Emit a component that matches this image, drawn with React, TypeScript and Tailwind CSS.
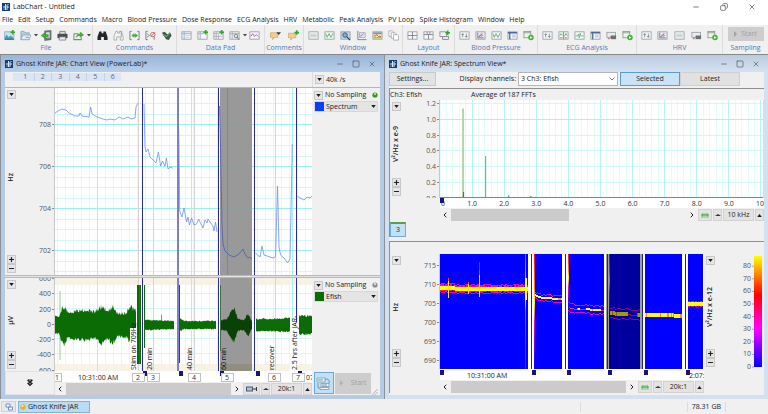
import { useState } from "react";
import type { ReactNode } from "react";
import { ChevronLeft, ChevronRight, Copy, Minus, Plus, Square, X } from "lucide-react";
import clsx from "clsx";

type Point = [number, number];

const MENUS = [
  "File", "Edit", "Setup", "Commands", "Macro", "Blood Pressure", "Dose Response", "ECG Analysis",
  "HRV", "Metabolic", "Peak Analysis", "PV Loop", "Spike Histogram", "Window", "Help",
];

const TOOL_GROUPS = [
  { label: "File", width: "w-[93px]", icons: ["new", "open", "caret", "import", "print", "export", "caret"] },
  { label: "Commands", width: "w-[84px]", icons: ["find", "findNext", "bracket", "bracketOff", "macro"] },
  { label: "Data Pad", width: "w-[88px]", icons: ["pad", "padAdd", "padMulti", "padView", "caret", "padWave"] },
  { label: "Comments", width: "w-[39px]", icons: ["comment", "commentAdd"] },
  { label: "Window", width: "w-[99px]", icons: ["list", "wave", "zoom", "xy", "spectrum", "pages"] },
  { label: "Layout", width: "w-[52px]", icons: ["grid", "grid2", "layoutAdd"] },
  { label: "Blood Pressure", width: "w-[83px]", icons: ["settings", "scatter", "wave", "table", "run"] },
  { label: "ECG Analysis", width: "w-[99px]", icons: ["settings", "split", "ecg", "table", "report", "run"] },
  { label: "HRV", width: "w-[86px]", icons: ["settings", "scatter", "list", "report", "run"] },
];

/* ---------- toolbar icons ---------- */

function Sheet({ fill = "#f4f6f8" }: { fill?: string }) {
  return <rect x="1" y="2" width="10" height="8" fill={fill} stroke="#8b929a" strokeWidth="0.8" />;
}

function AddMark({ x, y }: { x: number; y: number }) {
  return <path d={`M${x - 2.5} ${y}h5M${x} ${y - 2.5}v5`} stroke="#35a52c" strokeWidth="1.8" />;
}

const ICONS: Record<string, ReactNode> = {
  new: (
    <>
      <rect x="0.8" y="2" width="10" height="8.6" fill="#c3e4f4" stroke="#7a98ab" strokeWidth="0.7" />
      <path d="M1 8l2-3 2 3 2-2 3 2v2.5H1z" fill="#4e9fc4" />
      <path d="M1 10h10" stroke="#446577" />
      <AddMark x={9.5} y={2.5} />
    </>
  ),
  open: (
    <>
      <path d="M1 10.5V1.5h3.5l1 1.5h4.5v7.5z" fill="#b7cede" stroke="#7895aa" strokeWidth="0.7" />
      <path d="M1 10.5l2-5h9l-2 5z" fill="#e6f0f6" stroke="#7895aa" strokeWidth="0.7" />
      <path d="M6 8h4" stroke="#58a2c5" />
    </>
  ),
  import: (
    <>
      <path d="M4 1l7-.5v10l-7 1z" fill="#70797f" stroke="#555c60" strokeWidth="0.6" />
      <path d="M5.5 2.5h4v6h-4z" fill="#d9dfe0" />
      <path d="M0 6l4-3v2h4v2.5H4V9z" fill="#3fb532" stroke="#2b8522" strokeWidth="0.4" />
    </>
  ),
  print: (
    <>
      <path d="M3 1.5h6V5H3z" fill="#ddd" stroke="#666" strokeWidth="0.8" />
      <rect x="0.5" y="4" width="11" height="5" rx="0.8" fill="#4b4e52" />
      <path d="M2.5 7.5h7V11h-7z" fill="#e9e9e9" stroke="#666" strokeWidth="0.7" />
    </>
  ),
  export: (
    <>
      <path d="M1 4h5M1 4v6.5h8V8" fill="none" stroke="#7b858c" strokeWidth="1.1" />
      <path d="M3 9c0-3 2-5 4.500-5V1.500L12 5.500 7.500 8.500V6.500C5.500 6.500 4 7 3 9z" fill="#45ad38" />
    </>
  ),
  find: (
    <path d="M2.500 1.500h2.500v2h2v-2h2.500l2 6V11H7.500V7.500h-3V11H.5V7.500z" fill="#25282b" />
  ),
  findNext: (
    <>
      <path d="M3 1.500h2v2h2v-2h2l2 6V11H8V7.500H4V11H1V7.500z" fill="#f5f5f5" stroke="#9a9ea2" strokeWidth="0.8" />
      <path d="M9 1v7" stroke="#777" strokeWidth="0.7" />
    </>
  ),
  bracket: (
    <>
      <path d="M3 1.500H1v9h2M9 1.500h2v9H9" fill="none" stroke="#676c70" strokeWidth="0.9" />
      <path d="M3 6l2.500-2v1.200H7V4l2.500 2L7 8V6.800H5.500V8z" fill="#3cb52e" stroke="#3cb52e" strokeWidth="0.6" />
    </>
  ),
  bracketOff: (
    <>
      <path d="M3 1.500H1v9h2M10 7v3.500" fill="none" stroke="#676c70" strokeWidth="0.9" />
      <path d="M2 4l3 2-3 2" fill="none" stroke="#777" strokeWidth="0.8" />
      <circle cx="8.500" cy="5" r="2.400" fill="none" stroke="#c9565b" strokeWidth="0.9" />
      <path d="M6.500 7l4.500-4.500" stroke="#c9565b" strokeWidth="0.9" />
    </>
  ),
  macro: (
    <>
      <path d="M1 3l3-1 3 3 3-2 1.500 3-3 5-3-1z" fill="#4a5257" />
      <path d="M2 5l4 2 4-4" fill="none" stroke="#46b33a" strokeWidth="1.4" />
    </>
  ),
  pad: (
    <>
      <Sheet />
      <path d="M1 4h10M3.500 2v8" stroke="#8fa8cf" strokeWidth="0.9" />
      <path d="M5 6h5M5 8h4" stroke="#b9c4d6" strokeWidth="0.7" />
    </>
  ),
  padAdd: (
    <>
      <Sheet />
      <path d="M1 4h7M3.500 2v8" stroke="#8fa8cf" strokeWidth="0.9" />
      <AddMark x={9.5} y={2.5} />
    </>
  ),
  padMulti: (
    <>
      <Sheet />
      <path d="M1 4h7M3.500 2v8M6 5v5M1 7h9" stroke="#929ba6" strokeWidth="0.7" />
      <AddMark x={9.5} y={2.5} />
    </>
  ),
  padView: (
    <>
      <Sheet />
      <path d="M1 4h10M3.500 2v8" stroke="#8d959e" strokeWidth="0.7" />
      <circle cx="7.500" cy="6.500" r="2" fill="#d7e2ec" stroke="#666" strokeWidth="0.8" />
      <path d="M9 8l2 2.500" stroke="#555" />
    </>
  ),
  padWave: (
    <>
      <Sheet />
      <path d="M2 7l2-3 2 3 2-2 2 2" fill="none" stroke="#a348b5" strokeWidth="0.9" />
    </>
  ),
  comment: (
    <>
      <path d="M.5 3h8v5H5l-2 2.500V8H.5z" fill="#f1cf86" stroke="#b3995d" strokeWidth="0.6" />
      <path d="M7 2.500h5L9.500 5.500z" fill="#3a3a3a" />
    </>
  ),
  commentAdd: (
    <>
      <path d="M.5 3.500h8v5H5L3 11V8.500H.5z" fill="#f1cf86" stroke="#b3995d" strokeWidth="0.6" />
      <AddMark x={9.5} y={2.8} />
    </>
  ),
  list: (
    <>
      <Sheet />
      <path d="M2.500 4.500h7M2.500 6h7M2.500 7.500h7" stroke="#a5bda0" strokeWidth="0.7" />
    </>
  ),
  wave: (
    <>
      <Sheet />
      <path d="M2 4l1.500 4L5.500 4l2 4L10 3.500" fill="none" stroke="#4fa950" strokeWidth="0.9" />
    </>
  ),
  zoom: (
    <>
      <Sheet fill="#c3d6e8" />
      <circle cx="5.500" cy="5.500" r="2.500" fill="#78add7" stroke="#3b5268" strokeWidth="0.9" />
      <path d="M7.500 7.500L11 11" stroke="#2d3a46" strokeWidth="1.3" />
    </>
  ),
  xy: (
    <>
      <path d="M2 1v9.500h9.500" fill="none" stroke="#6f7e95" />
      <rect x="4" y="3" width="6" height="5" fill="#dde4f0" stroke="#8090aa" strokeWidth="0.6" />
      <path d="M4.500 7l4-3" stroke="#a55b76" strokeWidth="0.8" />
    </>
  ),
  spectrum: (
    <>
      <Sheet fill="#f6edaa" />
      <path d="M1.400 2.600h9.200v2H1.400z" fill="#6d93d1" />
      <path d="M2 6.500h2l1-1.500 2 2h3" fill="none" stroke="#b9483f" strokeWidth="0.9" />
      <path d="M2 8.500h8" stroke="#53a453" strokeWidth="0.9" />
    </>
  ),
  pages: (
    <>
      <path d="M1 1h4l1 1v5H1z" fill="#fff" stroke="#8b9197" strokeWidth="0.7" />
      <path d="M3.500 3h4l1 1v5h-5z" fill="#fff" stroke="#8b9197" strokeWidth="0.7" />
      <path d="M6 5h4l1.500 1.500V11H6z" fill="#fff" stroke="#8b9197" strokeWidth="0.7" />
    </>
  ),
  grid: (
    <>
      <Sheet />
      <path d="M6 2v8M1 6h10" stroke="#747a80" strokeWidth="0.9" />
    </>
  ),
  grid2: (
    <>
      <Sheet />
      <path d="M1 5h10M4.500 2v3M7.500 2v3M6 5v5" stroke="#747a80" strokeWidth="0.9" />
    </>
  ),
  layoutAdd: (
    <>
      <rect x="1" y="2" width="7" height="5" fill="#f4f6f8" stroke="#747a80" strokeWidth="0.8" />
      <rect x="4" y="7" width="6.500" height="3.500" fill="#e4e8ec" stroke="#747a80" strokeWidth="0.8" />
      <AddMark x={9.5} y={3} />
    </>
  ),
  settings: (
    <>
      <Sheet />
      <path d="M4 4v4M2.800 5.400L4 4l1.200 1.400M8 4v4M6.800 6.600L8 8l1.200-1.400" fill="none" stroke="#54606b" strokeWidth="0.7" />
    </>
  ),
  scatter: (
    <>
      <Sheet fill="#e7e9f4" />
      <path d="M3 3v5.500h6.500" fill="none" stroke="#5b64a0" strokeWidth="0.8" />
      <path d="M4 7.500l4-3.500" stroke="#cc5a5a" strokeWidth="1.1" />
      <path d="M6.500 7l2-1" stroke="#58ad58" />
    </>
  ),
  table: (
    <>
      <Sheet />
      <path d="M1 3h10" stroke="#4d699c" strokeWidth="1.6" />
      <path d="M3 3v7" stroke="#4d699c" strokeWidth="1.4" />
      <path d="M5.500 5.500h4M5.500 7.500h4" stroke="#98a9c6" strokeWidth="0.8" />
    </>
  ),
  split: (
    <>
      <Sheet />
      <path d="M6 2v8" stroke="#777" strokeWidth="0.8" />
      <path d="M2 6l1.500-2L5 6M7 7l1.500-3L10 6" fill="none" stroke="#49a349" strokeWidth="0.9" />
      <path d="M2 8.500h3M7 8.500h3" stroke="#b96378" strokeWidth="0.9" />
    </>
  ),
  ecg: (
    <>
      <Sheet />
      <path d="M1.500 6.500H4l.7-2 1 4 1-5 .8 3h3" fill="none" stroke="#4fae63" strokeWidth="0.8" />
    </>
  ),
  report: (
    <>
      <rect x="1" y="2.500" width="9.500" height="5.500" fill="#e9ebee" stroke="#8b9197" strokeWidth="0.8" />
      <path d="M5 6h6v4H5z" fill="#6a7077" />
      <path d="M2 9.500h2" stroke="#c35252" />
    </>
  ),
  run: (
    <>
      <rect x="1" y="1.500" width="7.500" height="7" fill="#edf3ec" stroke="#7d8b7d" strokeWidth="0.8" />
      <path d="M1 3h7.500" stroke="#7d8b7d" strokeWidth="0.8" />
      <circle cx="8.700" cy="8.200" r="3" fill="#3fb532" />
      <path d="M7.800 6.600v3.200l2.500-1.600z" fill="#fff" />
    </>
  ),
};

function ToolButton({ kind }: { kind: string }) {
  if (kind === "caret") {
    return (
      <button aria-label="More" className="flex h-3 w-1 items-center">
        <svg viewBox="0 0 4 4" className="size-1"><path d="M0 1h4L2 3.500z" fill="#444" /></svg>
      </button>
    );
  }
  return (
    <button aria-label={kind} className="flex h-3 min-w-0 flex-1 items-center justify-center">
      <svg viewBox="0 0 12 12" className="size-[11px] shrink-0">{ICONS[kind]}</svg>
    </button>
  );
}

/* ---------- shared bits ---------- */

function Logo() {
  return (
    <svg viewBox="0 0 8 8" className="size-2 shrink-0">
      <rect width="8" height="8" fill="#123f73" />
      <path d="M1 4h2M5 4h2M3.500 1v6M5 2v5" stroke="#fff" strokeWidth="0.9" />
      <path d="M1 6h2M5 1.500h2" stroke="#7fb2dd" strokeWidth="0.8" />
    </svg>
  );
}

function Arrow({ up }: { up?: boolean }) {
  return (
    <svg viewBox="0 0 6 4" className="h-[3px] w-[5px]">
      <path d={up ? "M0 4h6L3 0z" : "M0 0h6L3 4z"} fill="#1b1b1b" />
    </svg>
  );
}

function SmallButton({ label, children }: { label: string; children: ReactNode }) {
  return (
    <button
      aria-label={label}
      className="flex size-[9px] shrink-0 items-center justify-center border border-[#c8c8c8] bg-[#e5e5e5] text-[#222]"
    >
      {children}
    </button>
  );
}

function WindowFrame({ title, active, children }: { title: string; active?: boolean; children: ReactNode }) {
  return (
    <section
      className={clsx(
        "flex min-w-0 flex-col border-l border-[#8c9199] px-1 pb-1",
        active ? "bg-[#b4cae6]" : "bg-[#d3e0f0]",
      )}
    >
      <header
        className={clsx(
          "-mx-1 flex h-[17px] items-center gap-[3px] px-1 text-[#222]",
          active ? "bg-linear-to-b from-[#9ab4d6] to-[#b8cfeb]" : "bg-linear-to-b from-[#bccbdd] to-[#d5e2f2]",
        )}
      >
        <Logo />
        <h2 className="flex-1 truncate">{title}</h2>
        <div className="flex gap-2 pr-1 text-[#4b535d]">
          <button aria-label="Minimize"><Minus className="size-2" /></button>
          <button aria-label="Maximize"><Square className="size-2" /></button>
          <button aria-label="Close"><X className="size-2" /></button>
        </div>
      </header>
      <div className="flex-1 bg-[#f0f0f0]">{children}</div>
    </section>
  );
}

function AxisSide({ unit }: { unit: string }) {
  return (
    <div className="flex w-3 shrink-0 flex-col items-center justify-between py-[2px]">
      <SmallButton label={`${unit} axis menu`}><Arrow /></SmallButton>
      <span className="rotate-180 font-semibold text-[#222] [writing-mode:vertical-rl]">{unit}</span>
      <div className="flex flex-col">
        <SmallButton label="Expand axis"><Plus className="size-[7px]" strokeWidth={4} /></SmallButton>
        <SmallButton label="Compress axis"><Minus className="size-[7px]" strokeWidth={4} /></SmallButton>
      </div>
    </div>
  );
}

function AxisScale({ top, height, ticks }: { top: number; height: number; ticks: [string, number][] }) {
  return (
    <svg viewBox={`0 ${top} 38 ${height}`} className="w-[38px] shrink-0 overflow-hidden" height={height}>
      {ticks.map(([label, y]) => (
        <g key={label}>
          <text x="34" y={y + 3} textAnchor="end" fill="#555">{label}</text>
          <path d={`M35 ${y + 0.5}h3`} stroke="#888" />
        </g>
      ))}
      <path d={`M37.500 ${top}v${height}`} stroke="#c8c8c8" />
    </svg>
  );
}

function ScrollRow({ thumb, zoom, children }: { thumb: string; zoom: string; children: ReactNode }) {
  return (
    <div className="flex h-[13px] items-stretch gap-px pt-px text-[#222]">
      <button aria-label="Scroll left" className="flex w-[10px] items-center justify-center">
        <ChevronLeft className="size-2" strokeWidth={3} />
      </button>
      <div className="flex flex-1"><div className={clsx("bg-[#cbcbcb]", thumb)} /></div>
      <button aria-label="Scroll right" className="flex w-[10px] items-center justify-center">
        <ChevronRight className="size-2" strokeWidth={3} />
      </button>
      {children}
      <button aria-label="Zoom out" className="flex w-[9px] items-center justify-center border border-[#d2d2d2] bg-[#e3e3e3]">
        <svg viewBox="0 0 6 4" className="h-1 w-[6px]"><path d="M0 3h6L3 1z" fill="#333" /></svg>
      </button>
      <button className="w-[31px] border border-[#d2d2d2] bg-[#e3e3e3] text-center">{zoom}</button>
      <button aria-label="Zoom in" className="flex w-[9px] items-center justify-center border border-[#d2d2d2] bg-[#e3e3e3]">
        <Arrow up />
      </button>
    </div>
  );
}

function FitButton() {
  return (
    <button aria-label="Fit" className="flex w-[14px] items-center justify-center border border-[#d2d2d2] bg-[#e3e3e3]">
      <svg viewBox="0 0 10 6" className="h-[6px] w-[10px]">
        <path d="M1 5h8M2 4V2h6v2" fill="none" stroke="#87a887" strokeWidth="0.8" />
        <path d="M1 3l2-2v1.200h4V1l2 2-2 2V3.800H3V5z" fill="#51c043" />
      </svg>
    </button>
  );
}

/* ---------- data ---------- */

const line = (pts: Point[]) => "M" + pts.map((p) => p.join(" ")).join("L");

// repeatable noise in 0..1
const noise = (n: number) => {
  const v = Math.sin(n * 12.9898) * 43758.5453;
  return v - Math.floor(v);
};

const lerp = (keys: Point[], x: number) => {
  for (let i = 1; i < keys.length; i++) {
    const [x0, y0] = keys[i - 1];
    const [x1, y1] = keys[i];
    if (x <= x1) return y0 + ((y1 - y0) * (x - x0)) / (x1 - x0);
  }
  return keys[keys.length - 1][1];
};

const BLOCK_LINES = [142, 177, 218, 254, 296];

const TRACE: Point[][] = [
  [[55, 113], [58, 111], [62, 109], [66, 110], [69, 113], [75, 116], [79, 116], [80, 113], [82, 116], [89, 117], [90.6, 107], [92, 114], [97, 117], [103, 119], [107, 120], [110, 119], [115, 120], [119, 117], [123, 119], [128, 117], [131, 119], [135, 118], [136, 107], [138, 103]],
  [[144, 104], [145, 147], [146, 152], [148, 149], [150, 157], [153, 160], [156, 163], [158.4, 152], [160.6, 166], [162.5, 161], [165, 166], [166.4, 158], [168, 169], [170, 167], [172.6, 168]],
  [[178, 104], [179, 144], [179.7, 211], [182, 217], [184, 208], [186.6, 222], [188, 217], [189.4, 225], [191.6, 218], [194, 225], [196.6, 224], [198.6, 219], [200, 222], [203, 228], [205, 220], [207, 223], [208, 219], [210, 222], [213, 226], [214, 231], [215.5, 222], [217, 232]],
  [[219.5, 106], [220.6, 150], [222, 225], [223, 244], [225, 251], [229, 255], [234, 257], [239, 254], [243, 249], [245, 254], [248, 258], [250, 257], [252, 259]],
  [[255.4, 253], [260, 257], [262, 246], [264, 255], [270, 257], [273, 258], [275.5, 257], [277.5, 186], [279, 247], [280.6, 255], [284, 258], [287.6, 263], [290, 259], [291, 210], [292.3, 144]],
  [[297.4, 196], [300, 198], [304, 200], [307, 197], [310, 198], [312, 196]],
];

const BURSTS: Point[][] = [
  [[55, 9], [59, 9], [62, 17], [64, 19], [68, 12], [75, 14], [85, 15], [95, 13], [102, 19], [108, 13], [112, 19], [118, 11], [126, 12], [131, 18], [136, 14]],
  [[145, 5], [174, 4]],
  [[179, 7], [184, 4], [216, 4]],
  [[221, 5], [227, 6], [230, 11], [234, 17], [238, 6], [244, 5], [248, 11], [252, 4]],
  [[256, 6], [270, 6], [290, 7]],
  [[299, 9], [306, 9], [312, 9]],
];

function burstPath(keys: Point[]) {
  const top: Point[] = [];
  const bottom: Point[] = [];
  for (let x = keys[0][0]; x <= keys[keys.length - 1][0]; x += 0.5) {
    const amp = lerp(keys, x);
    top.push([x, 325 - amp * (0.85 + noise(x) * 0.3)]);
    bottom.unshift([x, 325 + amp * (0.85 + noise(x + 400) * 0.3)]);
  }
  return line([...top, ...bottom]) + "Z";
}

const COMMENTS: [string, number][] = [
  ["Stim on 709Hz", 136], ["20 min", 152], ["40 min", 192], ["60 min", 226], ["recover", 274], ["2.5 hrs after JAR-", 297],
];

function range(from: number, to: number, step: number) {
  const out: number[] = [];
  for (let v = from; v <= to; v += step) out.push(v);
  return out;
}

function GridLines({ y0, y1, rows, majors }: { y0: number; y1: number; rows: number[]; majors: number[] }) {
  return (
    <g shapeRendering="crispEdges">
      {range(57, 312, 8).map((x) => <path key={x} d={`M${x} ${y0}V${y1}`} stroke="#dcfafa" />)}
      {rows.map((y) => <path key={y} d={`M55 ${y}H312`} stroke="#d2f8f8" />)}
      {majors.map((y) => <path key={y} d={`M55 ${y}H312`} stroke="#96f2f2" />)}
      {[97, 191, 292].map((x) => <path key={x} d={`M${x} ${y0}V${y1}`} stroke="#a8f2f2" />)}
      {[138, 153, 194, 227, 275].map((x) => <path key={x} d={`M${x} ${y0}V${y1}`} stroke="#d6d6d6" />)}
    </g>
  );
}

function BlockLines({ y0, y1 }: { y0: number; y1: number }) {
  return (
    <>
      {BLOCK_LINES.map((x) => (
        <rect key={x} x={x} y={y0} width={x === 177 ? 2 : 1} height={y1 - y0} fill={x === 177 ? "#7f7dc6" : "#2a2a98"} />
      ))}
    </>
  );
}

function SpectrumTrace() {
  return (
    <svg viewBox="55 88 257 187" preserveAspectRatio="none" className="h-[187px] min-w-0 flex-1 bg-white">
      <GridLines y0={88} y1={275} rows={range(93, 275, 10.5)} majors={[124, 166, 208, 250]} />
      <rect x="220" y="88" width="32" height="187" fill="#999" />
      <path d="M220 124.500h32M220 166.500h32M220 208.500h32M220 250.500h32" stroke="#8f9c9c" />
      <path d="M227.500 88v187" stroke="#858585" />
      {TRACE.map((pts, i) => (
        <path key={i} d={line(pts)} fill="none" stroke={i === 3 ? "#4a5fae" : "#6d8ff5"} strokeWidth="0.8" />
      ))}
      <BlockLines y0={88} y1={275} />
    </svg>
  );
}

function EfishTrace() {
  return (
    <svg viewBox="55 278 257 93" preserveAspectRatio="none" className="h-[93px] min-w-0 flex-1 bg-white">
      <path d="M55 278h257v7H55zM55 364h257v7H55z" fill="#f6f2e6" />
      <GridLines y0={278} y1={371} rows={range(293, 364, 15)} majors={[]} />
      <rect x="220" y="278" width="32" height="93" fill="#999" />
      <path d="M220 364h32v7h-32z" fill="#918d80" />
      <path d="M60 291v69" stroke="#9bc898" />
      {BURSTS.map((keys, i) => <path key={i} d={burstPath(keys)} fill={i === 3 ? "#0a4206" : "#0b6b04"} />)}
      <path d="M161.500 315v10" stroke="#0b6b04" strokeWidth="0.6" />
      <path d="M130 328h7v43h-7zM290 322h8v49h-8z" fill="#fff" />
      <path d="M137 285h4v79h-4zM144 285h1v63h-1zM178 285h2v78h-2z" fill="#0b6b04" />
      <path d="M220.500 285v66" stroke="#41703c" />
      <path d="M139.500 285v79" stroke="#3d8a37" strokeWidth="0.5" />
      <BlockLines y0={278} y1={371} />
      <path d="M290 322h8v49h-8z" fill="#fff" />
      {COMMENTS.map(([text, x]) => (
        <text key={text} transform={`translate(${x} 370) rotate(-90)`} fill="#111">{text}</text>
      ))}
    </svg>
  );
}

const RECORDS: [string, number][] = [["1", 53], ["2", 132], ["3", 147], ["4", 188], ["5", 221], ["6", 268], ["7", 292]];

function TimeAxis() {
  return (
    <svg viewBox="55 371 257 11" preserveAspectRatio="none" className="h-[11px] min-w-0 flex-1 bg-white">
      {[144, 180, 221, 257, 299].map((x) => <rect key={x} x={x - 1} y="371" width="4" height="5" fill="#15157a" />)}
      {RECORDS.map(([n, x]) => (
        <g key={n}>
          <rect x={x + 0.5} y="373.500" width={n === "1" ? 8 : 12} height="8" fill="#fff" stroke="#c2c2c2" />
          <text x={x + (n === "1" ? 4 : 6)} y="380" textAnchor="middle" fill="#333">{n}</text>
        </g>
      ))}
      <text x="78" y="380" fill="#222">10:31:00 AM</text>
      <text x="306" y="380" fill="#222">07</text>
    </svg>
  );
}

function ChannelHead({ name, color, live }: { name: string; color: string; live?: boolean }) {
  return (
    <div className="flex w-[68px] shrink-0 flex-col gap-px px-[2px] pt-[2px]">
      <div className="flex h-[10px] items-center gap-[2px]">
        <SmallButton label={`${name} source`}><Arrow /></SmallButton>
        <span className="flex-1 whitespace-nowrap">No Sampling</span>
        <svg viewBox="0 0 6 6" className="size-[6px]">
          <circle cx="3" cy="3" r="2.600" fill={live ? "#3c8f20" : "#8a8f8c"} />
          <circle cx="3" cy="2" r="1.200" fill={live ? "#a9e08d" : "#d5d8d6"} />
        </svg>
      </div>
      <button className="flex h-[11px] items-center gap-[2px] border border-[#d8d8d8] bg-[#e4e4e4] pr-px text-left">
        <span className={clsx("size-[9px]", color)} />
        <span className="flex-1">{name}</span>
        <Arrow />
      </button>
    </div>
  );
}

function ChartView() {
  return (
    <WindowFrame title="Ghost Knife JAR: Chart View (PowerLab)*" active>
      <div className="flex h-4 border-b border-[#b5b5b5]">
        <div className="flex-1 pl-2">
          <div className="mt-px flex h-2 w-[108px] items-center bg-[#dbe5f3] pl-1 leading-[8px] text-[#5b6b85]">
            {["1", "2", "3", "4", "5", "6"].map((n) => (
              <span key={n} className="flex-1 border-r border-[#c6d2e4] text-center last:border-0">{n}</span>
            ))}
          </div>
        </div>
        <div className="flex w-[68px] items-center gap-[2px] border-l border-[#dcdcdc] px-[2px]">
          <SmallButton label="Sample rate"><Arrow /></SmallButton>
          <span>40k /s</span>
        </div>
      </div>

      <div className="flex">
        <AxisSide unit="Hz" />
        <AxisScale top={88} height={187} ticks={[["708", 124], ["706", 166], ["704", 208], ["702", 250]]} />
        <SpectrumTrace />
        <ChannelHead name="Spectrum" color="bg-[#0540ff]" live />
      </div>
      <div className="h-[3px] border-y border-[#b9b9b9] bg-[#e4e4e4]" />
      <div className="flex">
        <AxisSide unit="µV" />
        <AxisScale
          top={278}
          height={93}
          ticks={[["600", 278], ["400", 293], ["200", 309], ["0", 324], ["-200", 339], ["-400", 354], ["-600", 370]]}
        />
        <EfishTrace />
        <ChannelHead name="Efish" color="bg-[#0b6b04]" />
      </div>

      <div className="flex">
        <button aria-label="Show all channels" className="flex w-[50px] shrink-0 items-center justify-center border border-[#e0e0e0]">
          <svg viewBox="0 0 6 8" className="h-2 w-[6px]">
            <path d="M.5 1L3 3.500 5.500 1M.5 4L3 6.500 5.500 4M1 1h4M1 4h4" fill="none" stroke="#222" strokeWidth="1.200" />
          </svg>
        </button>
        <div className="flex min-w-0 flex-1 flex-col">
          <div className="flex"><TimeAxis /></div>
          <ScrollRow thumb="flex-1" zoom="20k:1">
            <button aria-label="Follow" className="flex w-[17px] items-center justify-center border border-[#d2d2d2] bg-[#e3e3e3]">
              <svg viewBox="0 0 12 6" className="h-[6px] w-3">
                <rect x="0.500" y="1" width="6" height="4" fill="#a9c3dc" stroke="#4a5a6c" />
                <path d="M10.500 1v4M7 3h3" stroke="#333" />
              </svg>
            </button>
          </ScrollRow>
        </div>
        <div className="flex w-[68px] shrink-0 items-center gap-px px-[2px]">
          <button aria-label="Monitor" className="flex h-[22px] w-[21px] items-center justify-center border border-[#66a7dc] bg-[#bfe0f7]">
            <svg viewBox="0 0 16 16" className="size-4">
              <path d="M1 3h8v4H1zM5 8.500h8v3H5zM4 12.500h9v2H4z" fill="#eef3f6" stroke="#8499a6" strokeWidth="0.8" />
              <path d="M9 4.500c3-1 5 0 4 4M2 8v5h2" fill="none" stroke="#7d96a8" />
              <path d="M6 10h5M2 5h5" stroke="#5f9dc4" />
            </svg>
          </button>
          <button disabled className="flex h-[21px] w-[39px] items-center justify-center gap-2 bg-[#cdcdcd] text-[#a2a2a2]">
            <svg viewBox="0 0 3 6" className="h-[6px] w-[3px]"><path d="M0 0v6l3-3z" fill="#a9b0bc" /></svg>
            Start
          </button>
          <svg viewBox="0 0 6 6" className="size-[6px] self-end">
            <path d="M0 6l6-6M3 6l3-3" stroke="#999" strokeWidth="0.8" />
          </svg>
        </div>
      </div>
    </WindowFrame>
  );
}

/* ---------- spectrum window ---------- */

function FftPlot() {
  return (
    <svg viewBox="439 100 323 98" preserveAspectRatio="none" className="h-[98px] w-full bg-white">
      <g shapeRendering="crispEdges">
        {range(439, 760, 6.4).map((x) => <path key={x} d={`M${x} 100V198`} stroke="#e2fbfb" />)}
        {[103, 135, 150, 166, 182].map((y) => <path key={y} d={`M439 ${y}H762`} stroke="#d2f8f8" />)}
        {range(471, 762, 32).map((x) => <path key={x} d={`M${x} 100V198`} stroke="#b4f6f6" />)}
        <path d="M439 119H762" stroke="#a4f4f4" />
      </g>
      <path d="M462 108.500v89" stroke="#b4d2ab" strokeWidth="2" />
      <path d="M462.500 192v5" stroke="#2c7d22" />
      <path d="M484.500 156v41" stroke="#6ba861" />
      <path d="M507.500 195.500v2M529.500 196v2" stroke="#2c7d22" />
      <path d="M439 197.500h323" stroke="#59a150" />
      <path d="M761.500 100v98" stroke="#dcdcdc" />
    </svg>
  );
}

function FrequencyAxis() {
  return (
    <svg viewBox="439 198 323 10" preserveAspectRatio="none" className="h-[10px] w-full bg-white">
      <text x="440" y="206" fill="#333">0</text>
      <rect x="439" y="198" width="4" height="5" fill="#15157a" />
      {range(1, 9, 1).map((n) => (
        <text key={n} x={439 + n * 32} y="206" textAnchor="middle" fill="#333">{n}.0</text>
      ))}
      <text x="754" y="206" fill="#333">10</text>
    </svg>
  );
}

interface Segment {
  from: number;
  to: number;
  path: Point[];
  gap: number;
  spread: number;
  core: number;
  seed: number;
}

const SEGMENTS: Segment[] = [
  { from: 439, to: 527, path: [[439, 288], [448, 288], [460, 289], [527, 289]], gap: 0, spread: 5, core: 2, seed: 1 },
  { from: 533, to: 561, path: [[533, 295], [541, 298], [561, 299]], gap: 0.25, spread: 4, core: 1, seed: 2 },
  { from: 567, to: 603, path: [[567, 307], [575, 309], [603, 310]], gap: 0.4, spread: 5, core: 1, seed: 3 },
  { from: 608, to: 639, path: [[608, 313], [620, 314], [639, 315]], gap: 0.3, spread: 6, core: 2, seed: 4 },
  { from: 644, to: 681, path: [[644, 315], [665, 315], [681, 316]], gap: 0.08, spread: 2, core: 2, seed: 5 },
  { from: 687, to: 702, path: [[687, 304], [702, 304]], gap: 0, spread: 3, core: 2, seed: 6 },
];

function SegmentCells({ s }: { s: Segment }) {
  const cells: ReactNode[] = [];
  const cell = (key: string, x: number, y: number, h: number, fill: string) =>
    cells.push(<rect key={key + x} x={x} y={y} width="1" height={h} fill={fill} />);

  for (let x = s.from; x < s.to; x++) {
    const y = Math.round(lerp(s.path, x));
    const n = noise(x + s.seed * 31);
    const block = noise(Math.floor(x / 3) + s.seed * 77);
    const up = s.spread - Math.round(noise(Math.floor(x / 2) + s.seed));
    const solid = s.gap === 0;

    if (s.spread >= 4 || n > 0.6) {
      cell("a", x, y - up, solid && n > 0.5 ? 2 : 1, n > 0.5 ? "#ff00c8" : "#d400f0");
      cell("b", x, y + up - 1, 1, n > 0.4 ? "#ff00a0" : "#e000ff");
    }
    if (solid && n > 0.2) cell("c", x, y - s.core - 1, s.core * 2 + 2, n > 0.6 ? "#ff3000" : "#e800c0");
    if (block >= s.gap) {
      cell("d", x, y - s.core, s.core * 2, n > 0.2 || solid ? "#ffff00" : "#ff9000");
    } else {
      cell("e", x, y, 1, "#ff2060");
    }
  }
  return <g shapeRendering="crispEdges">{cells}</g>;
}

function Spectrogram() {
  return (
    <svg viewBox="439 254 264 115" preserveAspectRatio="none" className="h-[115px] w-full bg-white">
      <defs>
        <linearGradient id="burst" x1="0" y1="0" x2="0" y2="1">
          <stop offset="0" stopColor="#ff2060" />
          <stop offset="0.25" stopColor="#ffb000" />
          <stop offset="0.4" stopColor="#ff0" />
          <stop offset="0.5" stopColor="#f40" />
          <stop offset="0.7" stopColor="#d000e0" />
          <stop offset="1" stopColor="#7000ff" />
        </linearGradient>
        <linearGradient id="onset" x1="0" y1="0" x2="0" y2="1">
          <stop offset="0" stopColor="#f04" />
          <stop offset="0.3" stopColor="#ff8000" />
          <stop offset="0.42" stopColor="#ff0" />
          <stop offset="0.6" stopColor="#e000c0" />
          <stop offset="1" stopColor="#00f" />
        </linearGradient>
      </defs>
      {SEGMENTS.map((s) => <rect key={s.from} x={s.from} y="254" width={s.to - s.from} height="115" fill="#0000ff" />)}
      {SEGMENTS.map((s) => <SegmentCells key={s.from} s={s} />)}
      <path d="M447 281h1v17h-1zM467 284h1v10h-1zM478 275h1v22h-1z" fill="#ffe000" />
      <path d="M447 278h1v3h-1zM467 282h1v2h-1zM478 270h1v5h-1z" fill="#ff4000" />
      <path d="M478.500 262v8" stroke="#c000ff" />
      <rect x="524" y="254" width="1" height="115" fill="url(#burst)" />
      <path d="M524 278h2v22h-2z" fill="#ff0" />
      <rect x="533" y="254" width="1" height="115" fill="url(#onset)" />
      <rect x="567" y="254" width="1" height="56" fill="url(#onset)" />
      <rect x="608" y="254" width="1" height="64" fill="url(#onset)" />
      <rect x="605" y="254" width="36" height="115" fill="#000" fillOpacity="0.38" />
      {[530, 564, 606, 641, 684].map((x) => (
        <rect key={x} x={x} y="254" width="1" height="115" fill="#23238c" />
      ))}
    </svg>
  );
}

function SpectrogramTime() {
  return (
    <svg viewBox="439 369 264 11" preserveAspectRatio="none" className="h-[11px] w-full bg-white">
      {[439, 531, 566, 607, 643, 685].map((x) => <rect key={x} x={x} y="370" width="4" height="5" fill="#15157a" />)}
      <text x="466" y="378" fill="#222">10:31:00 AM</text>
      <text x="688" y="378" fill="#222">2:07:</text>
    </svg>
  );
}

function ColorScale() {
  return (
    <svg viewBox="715 254 48 115" className="h-[115px] w-12 shrink-0">
      <defs>
        <linearGradient id="heat" x1="0" y1="0" x2="0" y2="1">
          <stop offset="0" stopColor="#ff0" />
          <stop offset="0.35" stopColor="#f00" />
          <stop offset="0.65" stopColor="#f0f" />
          <stop offset="1" stopColor="#00f" />
        </linearGradient>
      </defs>
      <rect x="753" y="256" width="8" height="111" fill="url(#heat)" />
      {range(0, 80, 10).map((n) => (
        <g key={n}>
          <text x="750" y={369 - n * 1.26} textAnchor="end" fill="#555">{n}</text>
          <path d={`M751 ${367 - n * 1.26}h2`} stroke="#888" strokeWidth="0.7" />
        </g>
      ))}
    </svg>
  );
}

function SpectrumView() {
  const [mode, setMode] = useState("Selected");

  return (
    <WindowFrame title="Ghost Knife JAR: Spectrum View*">
      <div className="flex h-4 items-start">
        <button className="h-[14px] w-[47px] border border-[#c9c9c9] bg-[#e3e3e3] text-center">Settings...</button>
        <label htmlFor="channels" className="flex-1 pr-[2px] text-right leading-[14px]">Display channels:</label>
        <div className="relative w-[100px]">
          <select id="channels" className="h-[14px] w-full appearance-none border border-[#b5b5b5] bg-white pl-[2px]">
            <option>3 Ch3: Efish</option>
          </select>
          <svg viewBox="0 0 6 4" className="pointer-events-none absolute top-[5px] right-[3px] h-1 w-[6px]">
            <path d="M.5.5L3 3 5.500.5" fill="none" stroke="#555" strokeWidth="0.8" />
          </svg>
        </div>
        <div className="flex pr-6 pl-[2px]">
          {["Selected", "Latest"].map((m) => (
            <button
              key={m}
              onClick={() => setMode(m)}
              className={clsx(
                "h-[14px] w-[60px] border text-center",
                mode === m ? "border-[#5a9bd0] bg-[#c9e2f6]" : "border-[#d0d0d0] bg-[#e1e1e1]",
              )}
            >
              {m}
            </button>
          ))}
        </div>
      </div>

      <div className="border-t border-l border-[#8f8f8f]">
        <div className="flex h-[11px] leading-[11px]">
          <span className="w-[81px]">Ch3: Efish</span>
          <span>Average of 187 FFTs</span>
        </div>
        <div className="flex">
          <AxisSide unit="V²/Hz x e-9" />
          <AxisScale
            top={100}
            height={98}
            ticks={[["1.2", 103], ["1.0", 119], ["0.8", 135], ["0.6", 150], ["0.4", 166], ["0.2", 182], ["0.0", 198]]}
          />
          <div className="min-w-0 flex-1"><FftPlot /></div>
        </div>
        <div className="pl-[50px]">
          <FrequencyAxis />
          <ScrollRow thumb="w-1/2" zoom="10 kHz"><FitButton /></ScrollRow>
        </div>
        <button className="mt-px block h-[15px] w-4 border border-t-2 border-[#6fabdd] border-t-[#5c9c4d] bg-[#c2e0f6] text-center">3</button>
      </div>

      <div className="mt-1 border-t border-l border-[#8f8f8f]">
        <div className="h-3" />
        <div className="flex">
          <AxisSide unit="Hz" />
          <AxisScale
            top={254}
            height={115}
            ticks={[["715", 265], ["710", 284], ["705", 303], ["700", 322], ["695", 341], ["690", 360]]}
          />
          <div className="min-w-0 flex-1"><Spectrogram /></div>
          <AxisSide unit="V²/Hz x e-12" />
          <ColorScale />
        </div>
        <div className="pr-[60px] pl-[50px]">
          <SpectrogramTime />
          <ScrollRow thumb="flex-1" zoom="20k:1"><FitButton /></ScrollRow>
        </div>
      </div>
    </WindowFrame>
  );
}

export default function App() {
  return (
    <div className="flex min-h-screen flex-col bg-[#f0f0f0] font-['Open_Sans','Noto_Sans',sans-serif] text-[7px] leading-[10px] text-[#222]">
      {/* Title */}
      <header className="flex h-[14px] items-center gap-[3px] bg-white pl-[2px]">
        <Logo />
        <h1 className="flex-1">LabChart - Untitled</h1>
        <div className="flex gap-5 pr-3 text-[#444]">
          <button aria-label="Minimize"><Minus className="size-2" /></button>
          <button aria-label="Restore"><Copy className="size-2 -scale-x-100" /></button>
          <button aria-label="Close"><X className="size-2" /></button>
        </div>
      </header>

      {/* Menus */}
      <nav className="flex h-[11px] items-center gap-[5px] bg-white pl-[2px] whitespace-nowrap">
        {MENUS.map((m) => <button key={m}>{m}</button>)}
      </nav>

      {/* Toolbar */}
      <div className="flex h-[30px] border-b border-[#85898e]">
        {TOOL_GROUPS.map((g) => (
          <div key={g.label} className={clsx("flex shrink-0 flex-col border-r border-[#dcdcdc] px-px pt-1", g.width)}>
            <div className="flex">
              {g.icons.map((kind, i) => <ToolButton key={i} kind={kind} />)}
            </div>
            <span className="mt-[2px] text-center whitespace-nowrap text-[#5577b5]">{g.label}</span>
          </div>
        ))}
        <div className="flex min-w-0 flex-1 flex-col items-center pt-[2px]">
          <button disabled className="flex h-[14px] w-[36px] items-center justify-center gap-1 bg-[#cdcdcd] text-[#a2a2a2]">
            <svg viewBox="0 0 3 6" className="h-[6px] w-[3px]"><path d="M0 0v6l3-3z" fill="#a2a2a2" /></svg>
            Start
          </button>
          <span className="mt-[2px] text-[#5577b5]">Sampling</span>
        </div>
      </div>

      {/* Document windows */}
      <main className="grid grid-cols-2">
        <ChartView />
        <SpectrumView />
      </main>

      {/* Window list and disk space */}
      <footer className="flex flex-1 items-center gap-[2px] pl-px">
        <button aria-label="Arrange windows" className="flex h-[11px] w-[15px] items-center justify-center border border-[#d0d0d0] bg-[#e8e8e8]">
          <svg viewBox="0 0 8 8" className="size-2">
            <path d="M1 1h4v3H1zM3.500 4h4v3h-4z" fill="#fff" stroke="#5d88bd" strokeWidth="0.9" />
          </svg>
        </button>
        <button className="flex h-3 w-[72px] items-center gap-[2px] border border-[#7db4de] bg-[#b9dbf3] px-px">
          <svg viewBox="0 0 6 6" className="size-[6px]">
            <circle cx="3" cy="3" r="2.700" fill="#e8b421" />
            <circle cx="2.500" cy="2" r="1" fill="#fff0a8" />
          </svg>
          Ghost Knife JAR
        </button>
        <div className="flex-1" />
        <div className="mr-[42px] flex">
          <span className="w-[107px] border-l border-[#dcdcdc]" />
          <span className="border-x border-[#dcdcdc] px-1">78.31 GB</span>
        </div>
      </footer>
    </div>
  );
}
